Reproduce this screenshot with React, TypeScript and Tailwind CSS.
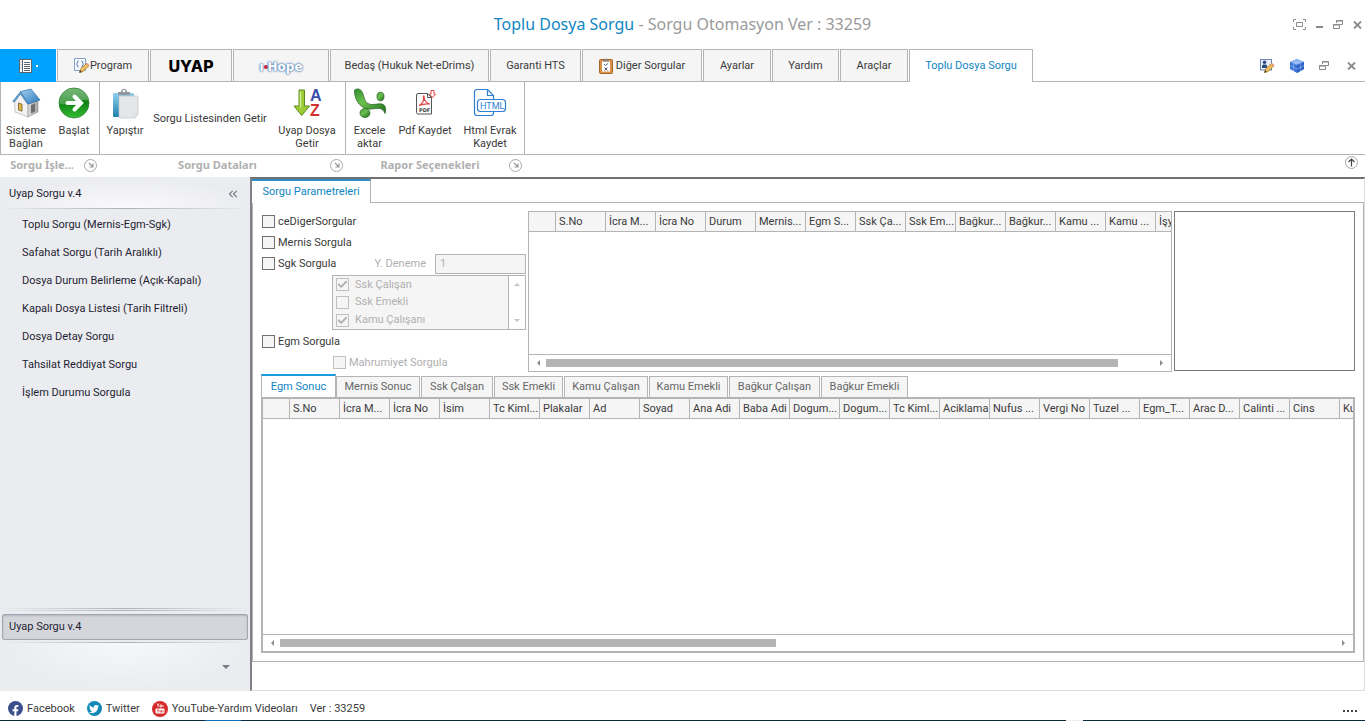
import type { ReactNode } from 'react'
import { Check, ChevronsLeft } from 'lucide-react'
import { FaFacebookF, FaTwitter } from 'react-icons/fa'

const MENU = [
  'Toplu Sorgu (Mernis-Egm-Sgk)',
  'Safahat Sorgu (Tarih Aralıklı)',
  'Dosya Durum Belirleme (Açık-Kapalı)',
  'Kapalı Dosya Listesi (Tarih Filtreli)',
  'Dosya Detay Sorgu',
  'Tahsilat Reddiyat Sorgu',
  'İşlem Durumu Sorgula',
]

const QUERY_COLUMNS = [
  'S.No', 'İcra M...', 'İcra No', 'Durum', 'Mernis...', 'Egm S...', 'Ssk Ça...',
  'Ssk Em...', 'Bağkur...', 'Bağkur...', 'Kamu ...', 'Kamu ...', 'İşy',
]

const RESULT_COLUMNS = [
  'S.No', 'İcra M...', 'İcra No', 'İsim', 'Tc Kiml...', 'Plakalar', 'Ad', 'Soyad', 'Ana Adi',
  'Baba Adi', 'Dogum...', 'Dogum...', 'Tc Kiml...', 'Aciklama', 'Nufus ...', 'Vergi No',
  'Tuzel ...', 'Egm_T...', 'Arac D...', 'Calinti ...', 'Cins', 'Ku',
]

const RESULT_TABS = [
  { label: 'Mernis Sonuc', width: 'w-[84px]' },
  { label: 'Ssk Çalşan', width: 'w-[72px]' },
  { label: 'Ssk Emekli', width: 'w-[69px]' },
  { label: 'Kamu Çalışan', width: 'w-[84px]' },
  { label: 'Kamu Emekli', width: 'w-[79px]' },
  { label: 'Bağkur Çalışan', width: 'w-[91px]' },
  { label: 'Bağkur Emekli', width: 'w-[87px]' },
]

/* ---------- ikonlar ---------- */

function RestoreIcon() {
  return (
    <svg width="10" height="9" viewBox="0 0 10 9" fill="none" stroke="#8a8a8a">
      <path d="M3.5 3V.5h6v4H7" />
      <path d="M3 1h7" />
      <path d="M.5 4.5h6v4h-6zM.5 5h6" />
    </svg>
  )
}

function CloseIcon() {
  return (
    <svg width="9" height="8" viewBox="0 0 9 8" stroke="#8a8a8a" strokeWidth="1.8">
      <path d="M1 .5l7 7M8 .5l-7 7" />
    </svg>
  )
}

function FullscreenIcon() {
  return (
    <svg width="13" height="11" viewBox="0 0 13 11" fill="none" stroke="#8a8a8a">
      <path d="M.5 3V.5H3M10 .5h2.5V3M12.5 8v2.5H10M3 10.5H.5V8" />
      <path d="M3.5 3.5h6v4h-6z" />
    </svg>
  )
}

function LauncherIcon() {
  return (
    <svg width="10" height="10" viewBox="0 0 10 10">
      <path d="M3 3l4 4M7 3.5V7H3.5" fill="none" stroke="#9a9a9a" strokeWidth="1.2" />
    </svg>
  )
}

function NotebookIcon() {
  return (
    <svg width="13" height="14" viewBox="0 0 13 14">
      <rect x=".5" y=".5" width="12" height="13" fill="#fff" stroke="#5a6670" />
      <path d="M3.5 1v12" stroke="#5a6670" />
      <path d="M5 3.5h6M5 5.5h6M5 7.5h6M5 9.5h6M5 11.5h6" stroke="#5a6670" />
      <path d="M1 3h2M1 6h2M1 9h2" stroke="#a9b2b8" />
    </svg>
  )
}

function PencilShape() {
  return (
    <g>
      <path d="M5.5 14.5l1-3.5 6-5.5 2.5 2.2-6 5.8z" fill="#f0c060" stroke="#a8762c" strokeWidth=".8" />
      <path d="M12 6l1-1 2.4 2.2-1 1z" fill="#e8907a" />
      <path d="M5.3 14.8l.8-2.6 1.8 1.8z" fill="#4b3a22" />
    </g>
  )
}

function ProgramIcon() {
  return (
    <svg width="16" height="16" viewBox="0 0 16 16">
      <path d="M.5 .5h11v12H.5z" fill="#f5f9ff" stroke="#7d9fd0" />
      <path d="M4.5 3c-1.5 0-.5 2.500-2 3 1.500.5.5 3 2 3M7.500 3c1.500 0 .5 2.500 2 3-1.500.5-.5 3-2 3" fill="none" stroke="#3d5f9e" />
      <PencilShape />
    </svg>
  )
}

function ProfileIcon() {
  return (
    <svg width="16" height="16" viewBox="0 0 16 16">
      <rect x="1.5" y="1.5" width="11" height="10.5" fill="#e9effa" stroke="#6a82b4" />
      <circle cx="5.5" cy="4.3" r="1.8" fill="#2c4a84" />
      <path d="M3 10V7.500c0-1.500 5-1.500 5 0V10z" fill="#2c4a84" />
      <PencilShape />
    </svg>
  )
}

function CubeIcon() {
  return (
    <svg width="16" height="16" viewBox="0 0 16 16">
      <path d="M8 1l7 3v7l-7 4-7-4V4z" fill="#3b74d6" />
      <path d="M8 1l7 3-7 3-7-3z" fill="#8fb6f0" />
      <path d="M8 7l7-3v7l-7 4z" fill="#2f62c6" />
      <path d="M3.5 3l7 3M12.5 3l-7 3M4.5 5.500v7.400M1 7.500l7 3.500 7-3.500M11.500 5.500v7.400" stroke="#a9c9f8" strokeWidth=".5" fill="none" />
    </svg>
  )
}

function ClipboardIcon() {
  return (
    <svg width="14" height="16" viewBox="0 0 14 16">
      <rect x=".5" y="1.5" width="13" height="14" rx="1" fill="#d99148" stroke="#a8652a" />
      <rect x="3" y="3.5" width="8" height="10" fill="#fff" />
      <path d="M4 3.500V2h2c0-2 2-2 2 0h2v1.500z" fill="#888" />
      <path d="M5 6l1.500 1.500L9 5.500M5.500 9.500l3 3M8.500 9.500l-3 3" stroke="#5a5a78" fill="none" />
    </svg>
  )
}

function HouseIcon() {
  return (
    <svg width="32" height="32" viewBox="0 0 32 32">
      <defs>
        <linearGradient id="roof" x1="0" y1="0" x2="1" y2="1">
          <stop offset="0" stopColor="#a5d2f2" />
          <stop offset="1" stopColor="#2a78bd" />
        </linearGradient>
        <linearGradient id="wall" x1="0" y1="0" x2="1" y2="0">
          <stop offset="0" stopColor="#dcdcdc" />
          <stop offset="1" stopColor="#a4a4a4" />
        </linearGradient>
      </defs>
      <path d="M4.500 14.500L11 6l7 11v13L5 25z" fill="#f2f2f2" stroke="#a8a8a8" strokeWidth=".6" />
      <path d="M18 17l10-3v11l-10 5z" fill="url(#wall)" stroke="#909090" strokeWidth=".6" />
      <path d="M10.500 4.500L21 2l9 11-12 4z" fill="url(#roof)" stroke="#2e6ea6" strokeWidth=".7" />
      <path d="M10.500 4.500L2.500 14.500l2 .5 6-8 6.500 9.500 1.500.5z" fill="#5fa0d4" stroke="#3c78ab" strokeWidth=".5" />
      <path d="M8.500 16l3.500 1.200v7L8.500 23z" fill="#e3b53a" stroke="#6b5a30" strokeWidth=".8" />
      <path d="M21 18l4-1.500v8L21 26.500z" fill="#6d6d6d" />
    </svg>
  )
}

function GoIcon() {
  return (
    <svg width="32" height="32" viewBox="0 0 32 32">
      <defs>
        <linearGradient id="go" x1="0" y1="0" x2="0" y2="1">
          <stop offset="0" stopColor="#4b9c4b" />
          <stop offset=".5" stopColor="#0f8414" />
          <stop offset="1" stopColor="#35bd35" />
        </linearGradient>
      </defs>
      <circle cx="16" cy="16" r="15" fill="url(#go)" stroke="#2c8230" strokeWidth=".8" />
      <path d="M1.500 17C1.500 7 8 1.500 16 1.500S30 7 30.500 13C22 11 11 19 1.500 17z" fill="#fff" opacity=".25" />
      <path d="M9.500 16h13M16.500 9.500L23 16l-6.500 6.500" fill="none" stroke="#fff" strokeWidth="4" strokeLinejoin="miter" strokeLinecap="round" />
    </svg>
  )
}

function PasteIcon() {
  return (
    <svg width="32" height="32" viewBox="0 0 32 32">
      <defs>
        <linearGradient id="board" x1="0" y1="0" x2="0" y2="1">
          <stop offset="0" stopColor="#8fd0ee" />
          <stop offset="1" stopColor="#1f7fae" />
        </linearGradient>
      </defs>
      <rect x="4" y="6" width="21" height="24" rx="1" fill="url(#board)" />
      <path d="M9 8V5h3c0-4.500 6-4.500 6 0h3v3z" fill="#8f979c" />
      <circle cx="15" cy="4" r="1.3" fill="#fff" />
      <path d="M11 9h17a1 1 0 011 1v17l-3 4H11a1 1 0 01-1-1V10a1 1 0 011-1z" fill="#e4e6e9" stroke="#bfc3c7" strokeWidth=".7" />
      <path d="M29 27h-3v4z" fill="#f8f8f8" stroke="#bfc3c7" strokeWidth=".5" />
    </svg>
  )
}

function SortIcon() {
  return (
    <svg width="32" height="32" viewBox="0 0 32 32">
      <path d="M8 3h5.500v16h5L10.700 28.500 3 19h5z" fill="#9bcb35" stroke="#5b8a1c" />
      <path d="M9.500 4.500v16" stroke="#d3eb96" strokeWidth="1.5" />
      <text x="19" y="14" fontFamily="Liberation Sans, sans-serif" fontWeight="700" fontSize="16" fill="#3b4fa8">A</text>
      <text x="19" y="29" fontFamily="Liberation Sans, sans-serif" fontWeight="700" fontSize="16" fill="#d2322e">Z</text>
    </svg>
  )
}

function ExcelIcon() {
  return (
    <svg width="34" height="32" viewBox="0 0 34 32">
      <defs>
        <linearGradient id="xl" x1="0" y1="0" x2="1" y2="1">
          <stop offset="0" stopColor="#2f8a2c" />
          <stop offset=".4" stopColor="#6cc24f" />
          <stop offset="1" stopColor="#1f6b20" />
        </linearGradient>
      </defs>
      <path d="M1.500 3c3-2 7-1.500 8.500 4 2 6 2 10 9 10.500 6 0 9-2 12.500 1 1.500 2 1.500 5 .5 8-2-5-5-6-13-4.500C9 23.500 1 14 1.500 3z" fill="url(#xl)" stroke="#245f22" strokeWidth=".7" />
      <ellipse cx="27.5" cy="9.5" rx="3.5" ry="4.3" fill="url(#xl)" stroke="#245f22" strokeWidth=".7" />
      <ellipse cx="12" cy="26" rx="5" ry="4.5" fill="url(#xl)" stroke="#245f22" strokeWidth=".7" />
    </svg>
  )
}

function PdfIcon() {
  return (
    <svg width="32" height="32" viewBox="0 0 32 32" fill="none">
      <path d="M9 6.500h9.500l4 4V27H9a1.500 1.500 0 01-1.500-1.500V8A1.500 1.500 0 019 6.500z" fill="#fff" stroke="#555" />
      <path d="M18.500 6.500v4h4" stroke="#555" />
      <path d="M10 18.500c3-1.500 5-5 4.500-8.500-.5-1.500 1-1.500.5 0 .5 4 2.500 6.500 6 7-4-.5-7.500 0-11 1.500z" stroke="#e04444" strokeWidth="1.2" />
      <path d="M22 3.500h3V7h1.500L23.500 10.500 20.500 7H22z" fill="#fff" stroke="#e04444" />
      <text x="10" y="25" fontFamily="DejaVu Sans, sans-serif" fontWeight="700" fontSize="5" fill="#444">PDF</text>
    </svg>
  )
}

function HtmlIcon() {
  return (
    <svg width="34" height="32" viewBox="0 0 34 32" fill="none" stroke="#2f7fd6" strokeWidth="1.2">
      <path d="M20.500 12V8.500l-6-6H4A2.500 2.500 0 001.500 5v21A2.500 2.500 0 004 28.500h14a2.500 2.500 0 002.500-2.500v-2" />
      <path d="M14.500 2.500v6h6" />
      <rect x="4.5" y="12.5" width="28" height="12" rx="3" fill="#fff" />
      <text x="7" y="22" fontFamily="Roboto, sans-serif" fontSize="9" fill="#2f7fd6" stroke="none">HTML</text>
    </svg>
  )
}

function YouTubeIcon() {
  return (
    <svg width="16" height="16" viewBox="0 0 16 16">
      <circle cx="8" cy="8" r="8" fill="#d42a2a" />
      <path d="M5 2.500l1 1.500v2M7 2.500L6 4M8 4h1.500v2H8zM11 4v2" stroke="#fff" strokeWidth=".8" fill="none" />
      <rect x="3.5" y="7.5" width="9" height="5" rx="1" fill="#fff" />
      <path d="M5 9h2M6 9v2.500M8 9v2h1.500V9M11 9v2.500" stroke="#d42a2a" strokeWidth=".7" fill="none" />
    </svg>
  )
}

/* ---------- küçük parçalar ---------- */

function RibbonTab({ width, children }: { width: string; children: ReactNode }) {
  return (
    <button className={`flex shrink-0 items-center justify-center whitespace-nowrap border border-[#b4b4b4] bg-[#f5f5f5] ${width}`}>
      {children}
    </button>
  )
}

function RibbonButton({ width, icon, children }: { width: string; icon?: ReactNode; children: ReactNode }) {
  return (
    <button className={`flex shrink-0 flex-col items-center leading-[13px] ${icon ? 'pt-[5px]' : 'justify-center'} ${width}`}>
      {icon && <span className="mb-[5px] flex h-8 items-center">{icon}</span>}
      {children}
    </button>
  )
}

function GroupCaption({ width, children }: { width: string; children: string }) {
  return (
    <div className={`flex shrink-0 items-center justify-between pr-2 ${width}`}>
      <span className="flex-1 whitespace-nowrap text-center font-['Noto_Sans',sans-serif] font-bold text-[#b0b0b0]">{children}</span>
      <button aria-label={`${children} seçenekleri`} className="flex size-[13px] items-center justify-center rounded-full border border-[#a8a8a8]">
        <LauncherIcon />
      </button>
    </div>
  )
}

function CheckField({ label, checked, disabled, gap = 'gap-[3px]' }: { label: string; checked?: boolean; disabled?: boolean; gap?: string }) {
  return (
    <label className={`flex items-center whitespace-nowrap ${gap} ${disabled ? 'text-[#b0b0b0]' : ''}`}>
      <span className="grid size-[13px] place-items-center">
        <input
          type="checkbox"
          defaultChecked={checked}
          disabled={disabled}
          className="peer col-start-1 row-start-1 size-[13px] appearance-none border border-[#707070] bg-[#f5f5f5] disabled:border-[#c0c0c0]"
        />
        <Check size={11} strokeWidth={4} className="pointer-events-none invisible col-start-1 row-start-1 text-[#b0b0b0] peer-checked:visible" />
      </span>
      {label}
    </label>
  )
}

function Grid({ columns, thumb }: { columns: string[]; thumb: string }) {
  return (
    <>
      <div className="min-h-0 w-full flex-1 overflow-hidden">
        <table className="w-0 table-fixed border-separate border-spacing-0">
          <colgroup>
            <col className="w-[27px]" />
            {columns.map((_, i) => (
              <col key={i} className="w-[50px]" />
            ))}
          </colgroup>
          <thead>
            <tr className="h-5 bg-[#f5f5f5]">
              <th className="border-b border-r border-[#b4b4b4]" />
              {columns.map((c, i) => (
                <th key={i} className="overflow-hidden whitespace-nowrap border-b border-r border-[#b4b4b4] p-0 pl-[3px] text-left font-normal">
                  {c}
                </th>
              ))}
            </tr>
          </thead>
        </table>
      </div>
      <div className="flex h-[17px] shrink-0 items-center gap-[6px] border-t border-[#b4b4b4] px-2">
        <span className="border-y-[3px] border-r-[3px] border-y-transparent border-r-[#8a8a8a]" />
        <div className="flex-1">
          <div className={`h-2 bg-[#b4b4b4] ${thumb}`} />
        </div>
        <span className="border-y-[3px] border-l-[3px] border-y-transparent border-l-[#8a8a8a]" />
      </div>
    </>
  )
}

/* ---------- bölümler ---------- */

function TitleBar() {
  return (
    <header className="flex h-[49px] items-center pr-[3px]">
      <h1 className="flex-1 pb-[2px] pl-[72px] text-center font-['Noto_Sans',sans-serif] text-base text-[#9a9a9a]">
        <span className="text-[#0f86c4]">Toplu Dosya Sorgu</span> - Sorgu Otomasyon Ver : 33259
      </h1>
      <div className="flex items-center gap-[10px]">
        <button aria-label="Tam ekran"><FullscreenIcon /></button>
        <button aria-label="Küçült" className="mt-[5px] h-[2px] w-[7px] bg-[#8a8a8a]" />
        <button aria-label="Geri yükle"><RestoreIcon /></button>
        <button aria-label="Kapat"><CloseIcon /></button>
      </div>
    </header>
  )
}

function RibbonTabs() {
  return (
    <nav className="flex h-[33px] gap-px shadow-[inset_0_-1px_0_#b4b4b4]">
      <button aria-label="Dosya" className="flex w-14 shrink-0 items-center justify-center gap-1 bg-[#00a2ff]">
        <NotebookIcon />
        <span className="size-[2px] bg-white" />
      </button>
      <RibbonTab width="w-[92px]"><ProgramIcon />Program</RibbonTab>
      <RibbonTab width="w-[82px]">
        <span className="font-[Inter,sans-serif] text-base font-extrabold text-black">UYAP</span>
      </RibbonTab>
      <RibbonTab width="w-[96px]">
        <span className="pt-[2px] font-['DejaVu_Sans',sans-serif] text-[12px] font-bold text-white [text-shadow:0_0_1px_#5580b4,0_0_2px_#6f93c0,0_0_2px_#6f93c0,0_0_3px_#8fb0d4]">
          ı<span className="inline-block size-1 rounded-full bg-[#d01830] align-middle" />Hope
        </span>
      </RibbonTab>
      <RibbonTab width="w-[159px]">Bedaş (Hukuk Net-eDrims)</RibbonTab>
      <RibbonTab width="w-[91px]">Garanti HTS</RibbonTab>
      <RibbonTab width="w-[120px]">
        <span className="mr-[3px]"><ClipboardIcon /></span>Diğer Sorgular
      </RibbonTab>
      <RibbonTab width="w-[68px]">Ayarlar</RibbonTab>
      <RibbonTab width="w-[67px]">Yardım</RibbonTab>
      <RibbonTab width="w-[68px]">Araçlar</RibbonTab>
      <button className="w-[124px] shrink-0 whitespace-nowrap border border-b-0 border-[#b4b4b4] bg-white text-[#0f86c4]">
        Toplu Dosya Sorgu
      </button>
      <div className="ml-auto flex items-center gap-[14px] pr-[9px]">
        <button aria-label="Profil"><ProfileIcon /></button>
        <button aria-label="Modüller"><CubeIcon /></button>
        <button aria-label="Pencereyi geri yükle"><RestoreIcon /></button>
        <button aria-label="Pencereyi kapat" className="ml-1"><CloseIcon /></button>
      </div>
    </nav>
  )
}

function Ribbon() {
  return (
    <section>
      <div className="flex h-[73px] border-b border-[#b4b4b4]">
        <div className="flex w-[99px] shrink-0 border-l border-[#b4b4b4]">
          <RibbonButton width="w-[50px]" icon={<HouseIcon />}>Sisteme<br />Bağlan</RibbonButton>
          <RibbonButton width="w-[46px]" icon={<GoIcon />}>Başlat</RibbonButton>
        </div>
        <div className="flex w-[246px] shrink-0 border-l border-[#b4b4b4] pl-[2px]">
          <RibbonButton width="w-[46px]" icon={<PasteIcon />}>Yapıştır</RibbonButton>
          <RibbonButton width="w-[124px]">Sorgu Listesinden Getir</RibbonButton>
          <RibbonButton width="w-[70px]" icon={<SortIcon />}>Uyap Dosya<br />Getir</RibbonButton>
        </div>
        <div className="flex w-[180px] shrink-0 border-x border-[#b4b4b4] pl-[2px]">
          <RibbonButton width="w-[43px]" icon={<ExcelIcon />}>Excele<br />aktar</RibbonButton>
          <RibbonButton width="w-[68px]" icon={<PdfIcon />}>Pdf Kaydet</RibbonButton>
          <RibbonButton width="w-[62px]" icon={<HtmlIcon />}>Html Evrak<br />Kaydet</RibbonButton>
        </div>
      </div>
      <div className="flex h-[22px] items-center pb-[2px]">
        <GroupCaption width="w-[105px]">Sorgu İşle...</GroupCaption>
        <GroupCaption width="w-[246px]">Sorgu Dataları</GroupCaption>
        <GroupCaption width="w-[179px]">Rapor Seçenekleri</GroupCaption>
        <button aria-label="Şeridi daralt" className="mb-[5px] ml-auto mr-[7px] flex size-[13px] items-center justify-center rounded-full border border-[#a8a8a8]">
          <svg width="9" height="9" viewBox="0 0 9 9" fill="none" stroke="#444" strokeWidth="1.2">
            <path d="M4.500 8.500V1M1.500 4l3-3 3 3" />
          </svg>
        </button>
      </div>
    </section>
  )
}

function Sidebar() {
  return (
    <aside className="flex w-[250px] shrink-0 flex-col bg-[#ebecf0] text-[#1e1e32]">
      <div className="flex h-[31px] items-center justify-between bg-[radial-gradient(ellipse_at_bottom,#fafafc,#ebecf0_70%)] pl-[9px] pr-[10px] pt-[3px]">
        <span>Uyap Sorgu v.4</span>
        <button aria-label="Menüyü daralt"><ChevronsLeft size={14} color="#7a7c88" /></button>
      </div>
      <div className="h-px bg-linear-to-r from-[#ebecf0] via-[#b0b1b8] to-[#ebecf0]" />
      <nav className="flex flex-1 flex-col pt-[2px]">
        {MENU.map((m) => (
          <a key={m} href="#" className="flex h-7 items-center whitespace-nowrap pl-[22px]">
            {m}
          </a>
        ))}
      </nav>
      <div className="h-px bg-linear-to-r from-[#ebecf0] via-[#b0b1b8] to-[#ebecf0]" />
      <div className="mb-[3px] mt-px h-px bg-linear-to-r from-[#ebecf0] via-[#b0b1b8] to-[#ebecf0]" />
      <button className="mx-[2px] h-[26px] rounded-xs border border-[#a4a5ae] bg-[#d5d6dc] pl-[6px] text-left shadow-[inset_0_1px_2px_#b4b5be]">
        Uyap Sorgu v.4
      </button>
      <div className="mt-[2px] h-px bg-linear-to-r from-[#ebecf0] via-[#b0b1b8] to-[#ebecf0]" />
      <div className="flex h-12 items-center justify-end bg-[radial-gradient(ellipse_at_top,#f6f7f9,#ebecf0_70%)] pr-5">
        <button aria-label="Menü seçenekleri" className="border-x-4 border-t-4 border-x-transparent border-t-[#7a7c88]" />
      </div>
    </aside>
  )
}

function Params() {
  return (
    <div className="flex w-[265px] shrink-0 flex-col pl-px">
      <div className="flex h-[21px] shrink-0"><CheckField label="ceDigerSorgular" /></div>
      <div className="flex h-[21px] shrink-0"><CheckField label="Mernis Sorgula" /></div>
      <div className="flex h-[21px] shrink-0 items-center justify-between">
        <CheckField label="Sgk Sorgula" />
        <label className="flex items-center gap-[9px] text-[#b0b0b0]">
          Y. Deneme
          <input disabled defaultValue="1" className="h-5 w-[91px] border border-[#b4b4b4] bg-[#f5f5f5] px-1" />
        </label>
      </div>
      <div className="mt-px flex h-[55px] w-[194px] shrink-0 self-end border border-[#b4b4b4]">
        <div className="flex flex-1 flex-col justify-around bg-[#f5f5f5] pl-[3px]">
          <CheckField label="Ssk Çalışan" checked disabled gap="gap-[6px]" />
          <CheckField label="Ssk Emekli" disabled gap="gap-[6px]" />
          <CheckField label="Kamu Çalışanı" checked disabled gap="gap-[6px]" />
        </div>
        <div className="flex w-[17px] flex-col items-center justify-between border-l border-[#b4b4b4] bg-white py-[7px]">
          <span className="border-x-[3px] border-b-[3px] border-x-transparent border-b-[#c4c4c4]" />
          <span className="border-x-[3px] border-t-[3px] border-x-transparent border-t-[#c4c4c4]" />
        </div>
      </div>
      <div className="mt-px flex h-[21px] shrink-0"><CheckField label="Egm Sorgula" /></div>
      <div className="flex h-[21px] shrink-0 pl-[71px]"><CheckField label="Mahrumiyet Sorgula" disabled /></div>
    </div>
  )
}

function Results() {
  return (
    <div className="mt-[2px] flex flex-1 flex-col">
      <div className="flex h-[23px] items-end">
        <button className="h-[23px] w-[75px] shrink-0 border-x border-t-2 border-x-[#b4b4b4] border-t-[#1a9be0] text-[#0f86c4]">Egm Sonuc</button>
        {RESULT_TABS.map((t) => (
          <button key={t.label} className={`mr-px h-[21px] shrink-0 whitespace-nowrap border border-b-0 border-[#b4b4b4] bg-[#f5f5f5] text-[#666] ${t.width}`}>
            {t.label}
          </button>
        ))}
      </div>
      <div className="flex flex-1 flex-col border-2 border-[#b4b4b4]">
        <Grid columns={RESULT_COLUMNS} thumb="w-[47%]" />
      </div>
    </div>
  )
}

function SocialLink({ icon, children }: { icon: ReactNode; children: string }) {
  return (
    <a href="#" className="mr-3 flex items-center gap-1">
      {icon}
      {children}
    </a>
  )
}

export default function App() {
  return (
    <div className="flex min-h-screen flex-col overflow-hidden bg-white font-[Roboto,sans-serif] text-[11px] leading-4 text-[#3a3a3a]">
      <TitleBar />
      <RibbonTabs />
      <Ribbon />

      <div className="flex flex-1">
        <Sidebar />
        <main className="flex min-w-0 flex-1 flex-col border-b border-l-2 border-r border-t-2 border-b-[#dcdcdc] border-l-[#808086] border-r-[#dcdcdc] border-t-[#707070]">
          <div className="flex h-6">
            <button className="w-[119px] shrink-0 border-r border-t-2 border-r-[#b4b4b4] border-t-[#2f8cc4] text-[#0f86c4]">Sorgu Parametreleri</button>
            <div className="flex-1 border-b border-[#b4b4b4]" />
          </div>
          <div className="mb-7 flex flex-1 flex-col border-b border-l border-r border-[#b4b4b4] p-2">
            <div className="flex h-[161px] gap-[2px]">
              <Params />
              <div className="flex min-w-0 flex-1 flex-col border border-[#b4b4b4]">
                <Grid columns={QUERY_COLUMNS} thumb="w-[94%]" />
              </div>
              <textarea aria-label="Notlar" className="h-[160px] w-[181px] shrink-0 resize-none border border-[#7a7a7a]" />
            </div>
            <Results />
          </div>
        </main>
      </div>

      <footer className="flex h-[29px] items-center px-2 pt-[6px]">
        <SocialLink
          icon={
            <span className="flex size-[15px] items-end justify-center rounded-full bg-[#3a4f8c] text-[11px] text-white"><FaFacebookF /></span>
          }
        >
          Facebook
        </SocialLink>
        <SocialLink
          icon={
            <span className="flex size-[15px] items-center justify-center rounded-full bg-[#1389b8] text-[10px] text-white"><FaTwitter /></span>
          }
        >
          Twitter
        </SocialLink>
        <SocialLink icon={<YouTubeIcon />}>YouTube-Yardım Videoları</SocialLink>
        <span>Ver : 33259</span>
        <span className="ml-auto flex gap-[2px] pt-1">
          <i className="size-[2px] bg-[#444]" />
          <i className="size-[2px] bg-[#444]" />
          <i className="size-[2px] bg-[#444]" />
          <i className="size-[2px] bg-[#444]" />
        </span>
      </footer>
      <div className="flex h-px bg-[#0c2a3e]">
        <span className="ml-[15%] w-9 bg-[#0f6fb8]" />
        <span className="ml-auto mr-[282px] w-[17px] bg-[#eeeeee]" />
      </div>
    </div>
  )
}
